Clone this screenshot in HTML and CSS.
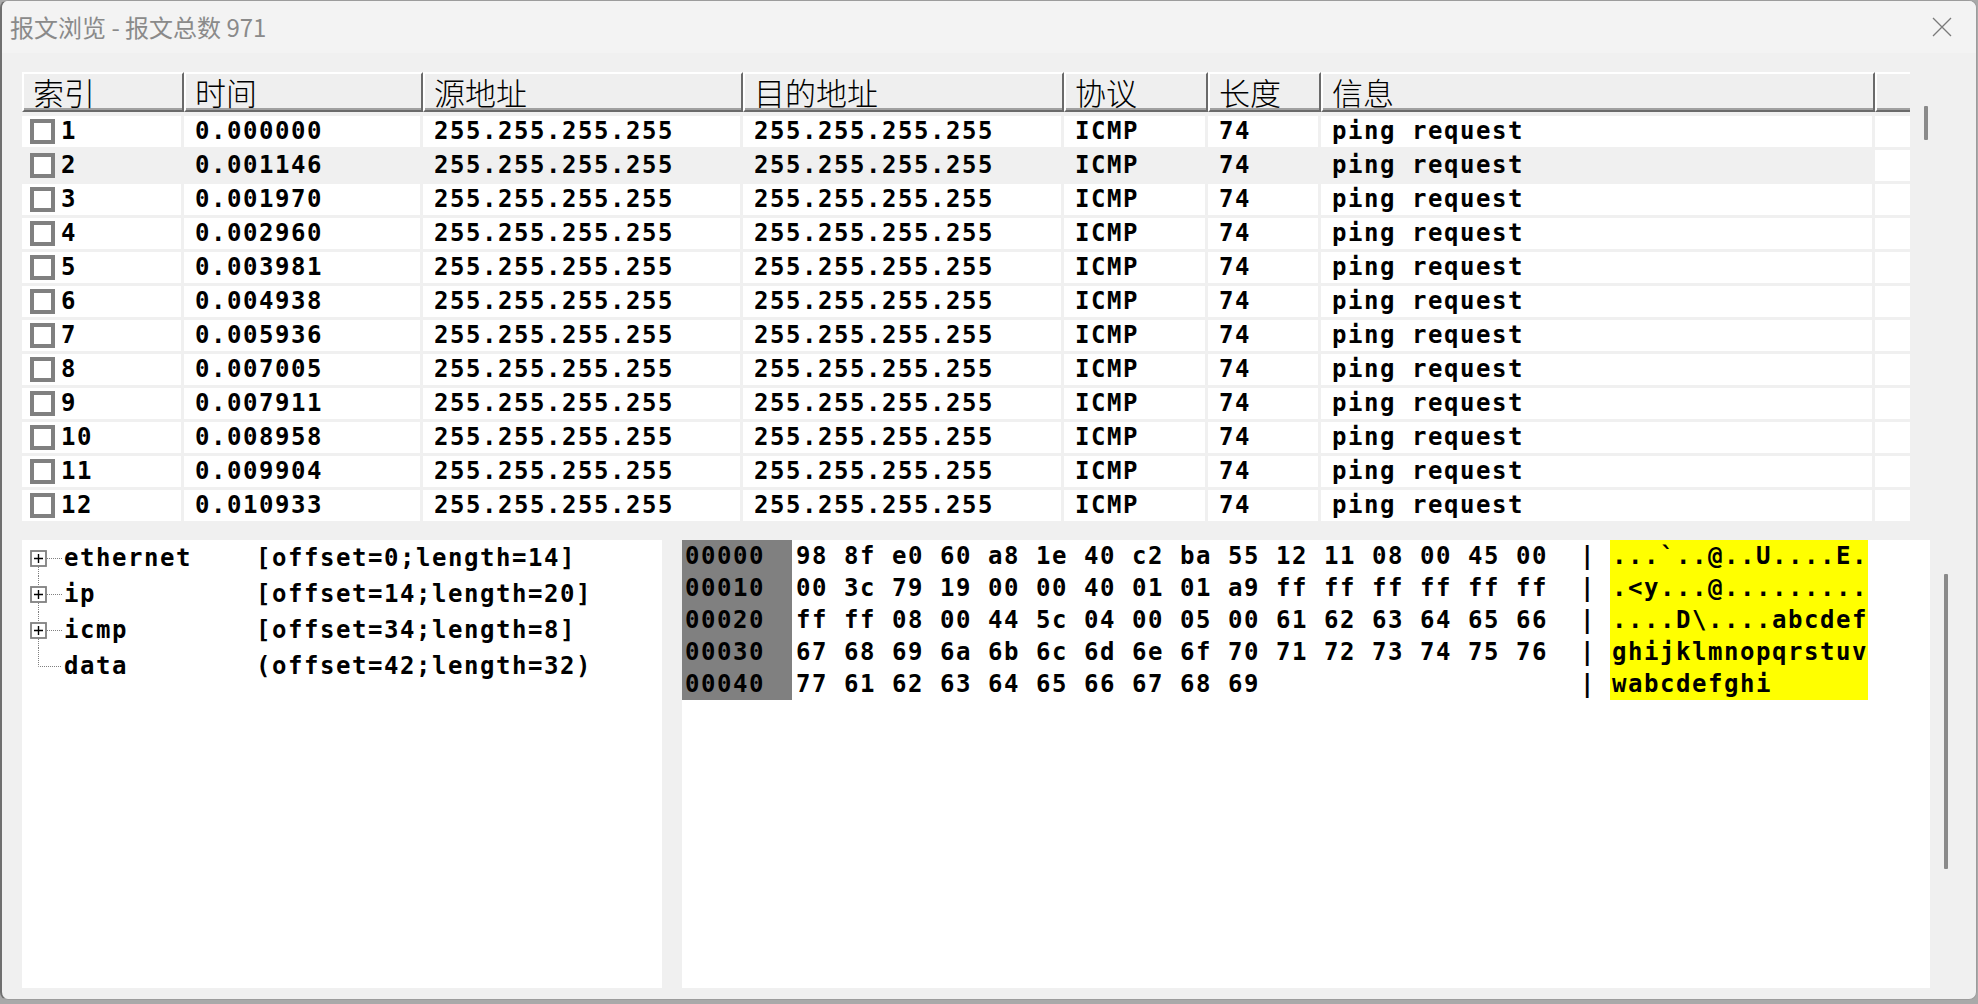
FILE: index.html
```html
<!DOCTYPE html>
<html lang="zh">
<head>
<meta charset="utf-8">
<title>报文浏览</title>
<link rel="stylesheet" href="styles.css">
</head>
<body>
<div class="window">
  <div class="titlebar">
    <span class="title">报文浏览 - 报文总数 971</span>
    <svg class="close" width="20" height="20" viewBox="0 0 20 20"><path d="M1 1 L19 19 M19 1 L1 19" stroke="#7a7a7a" stroke-width="1.3" fill="none"/></svg>
  </div>
  <div class="content">
    <div class="top">
      <div class="table">
        <div class="thead">
          <div class="th">索引</div>
          <div class="th">时间</div>
          <div class="th">源地址</div>
          <div class="th">目的地址</div>
          <div class="th">协议</div>
          <div class="th">长度</div>
          <div class="th th-info">信息</div>
          <div class="th th-end"></div>
        </div>
        <div class="tbody">
          <div class="tr"><div class="td idx"><span class="cb"></span>1</div><div class="td">0.000000</div><div class="td">255.255.255.255</div><div class="td">255.255.255.255</div><div class="td">ICMP</div><div class="td">74</div><div class="td">ping request</div><div class="td end"></div></div>
          <div class="tr hover"><div class="td idx"><span class="cb"></span>2</div><div class="td">0.001146</div><div class="td">255.255.255.255</div><div class="td">255.255.255.255</div><div class="td">ICMP</div><div class="td">74</div><div class="td">ping request</div><div class="td end"></div></div>
          <div class="tr"><div class="td idx"><span class="cb"></span>3</div><div class="td">0.001970</div><div class="td">255.255.255.255</div><div class="td">255.255.255.255</div><div class="td">ICMP</div><div class="td">74</div><div class="td">ping request</div><div class="td end"></div></div>
          <div class="tr"><div class="td idx"><span class="cb"></span>4</div><div class="td">0.002960</div><div class="td">255.255.255.255</div><div class="td">255.255.255.255</div><div class="td">ICMP</div><div class="td">74</div><div class="td">ping request</div><div class="td end"></div></div>
          <div class="tr"><div class="td idx"><span class="cb"></span>5</div><div class="td">0.003981</div><div class="td">255.255.255.255</div><div class="td">255.255.255.255</div><div class="td">ICMP</div><div class="td">74</div><div class="td">ping request</div><div class="td end"></div></div>
          <div class="tr"><div class="td idx"><span class="cb"></span>6</div><div class="td">0.004938</div><div class="td">255.255.255.255</div><div class="td">255.255.255.255</div><div class="td">ICMP</div><div class="td">74</div><div class="td">ping request</div><div class="td end"></div></div>
          <div class="tr"><div class="td idx"><span class="cb"></span>7</div><div class="td">0.005936</div><div class="td">255.255.255.255</div><div class="td">255.255.255.255</div><div class="td">ICMP</div><div class="td">74</div><div class="td">ping request</div><div class="td end"></div></div>
          <div class="tr"><div class="td idx"><span class="cb"></span>8</div><div class="td">0.007005</div><div class="td">255.255.255.255</div><div class="td">255.255.255.255</div><div class="td">ICMP</div><div class="td">74</div><div class="td">ping request</div><div class="td end"></div></div>
          <div class="tr"><div class="td idx"><span class="cb"></span>9</div><div class="td">0.007911</div><div class="td">255.255.255.255</div><div class="td">255.255.255.255</div><div class="td">ICMP</div><div class="td">74</div><div class="td">ping request</div><div class="td end"></div></div>
          <div class="tr"><div class="td idx"><span class="cb"></span>10</div><div class="td">0.008958</div><div class="td">255.255.255.255</div><div class="td">255.255.255.255</div><div class="td">ICMP</div><div class="td">74</div><div class="td">ping request</div><div class="td end"></div></div>
          <div class="tr"><div class="td idx"><span class="cb"></span>11</div><div class="td">0.009904</div><div class="td">255.255.255.255</div><div class="td">255.255.255.255</div><div class="td">ICMP</div><div class="td">74</div><div class="td">ping request</div><div class="td end"></div></div>
          <div class="tr"><div class="td idx"><span class="cb"></span>12</div><div class="td">0.010933</div><div class="td">255.255.255.255</div><div class="td">255.255.255.255</div><div class="td">ICMP</div><div class="td">74</div><div class="td">ping request</div><div class="td end"></div></div>
        </div>
      </div>
      <div class="vscroll vscroll-top"><div class="thumb thumb-top"></div></div>
    </div>
    <div class="bottom">
      <div class="tree">
        <div class="node">
          <svg class="gut" width="42" height="36" viewBox="0 0 42 36"><path d="M16.5 27 V36 M25 18.5 H40" stroke="#808080" stroke-width="1" stroke-dasharray="1 1" fill="none"/><rect x="9" y="11" width="15" height="15" fill="#fff" stroke="#808080" stroke-width="1.8"/><path d="M12 18.5 H21 M16.5 14 V23" stroke="#000" stroke-width="1.4"/></svg>
          <span class="label">ethernet    [offset=0;length=14]</span>
        </div>
        <div class="node">
          <svg class="gut" width="42" height="36" viewBox="0 0 42 36"><path d="M16.5 0 V10 M16.5 27 V36 M25 18.5 H40" stroke="#808080" stroke-width="1" stroke-dasharray="1 1" fill="none"/><rect x="9" y="11" width="15" height="15" fill="#fff" stroke="#808080" stroke-width="1.8"/><path d="M12 18.5 H21 M16.5 14 V23" stroke="#000" stroke-width="1.4"/></svg>
          <span class="label">ip          [offset=14;length=20]</span>
        </div>
        <div class="node">
          <svg class="gut" width="42" height="36" viewBox="0 0 42 36"><path d="M16.5 0 V10 M16.5 27 V36 M25 18.5 H40" stroke="#808080" stroke-width="1" stroke-dasharray="1 1" fill="none"/><rect x="9" y="11" width="15" height="15" fill="#fff" stroke="#808080" stroke-width="1.8"/><path d="M12 18.5 H21 M16.5 14 V23" stroke="#000" stroke-width="1.4"/></svg>
          <span class="label">icmp        [offset=34;length=8]</span>
        </div>
        <div class="node">
          <svg class="gut" width="42" height="36" viewBox="0 0 42 36"><path d="M16.5 0 V18.5 H40" stroke="#808080" stroke-width="1" stroke-dasharray="1 1" fill="none"/></svg>
          <span class="label">data        (offset=42;length=32)</span>
        </div>
      </div>
      <div class="hex">
        <div class="hline"><span class="off">00000</span><span class="bytes">98 8f e0 60 a8 1e 40 c2 ba 55 12 11 08 00 45 00  |</span><span class="ascii">...`..@..U....E.</span></div>
        <div class="hline"><span class="off">00010</span><span class="bytes">00 3c 79 19 00 00 40 01 01 a9 ff ff ff ff ff ff  |</span><span class="ascii">.&lt;y...@.........</span></div>
        <div class="hline"><span class="off">00020</span><span class="bytes">ff ff 08 00 44 5c 04 00 05 00 61 62 63 64 65 66  |</span><span class="ascii">....D\....abcdef</span></div>
        <div class="hline"><span class="off">00030</span><span class="bytes">67 68 69 6a 6b 6c 6d 6e 6f 70 71 72 73 74 75 76  |</span><span class="ascii">ghijklmnopqrstuv</span></div>
        <div class="hline"><span class="off">00040</span><span class="bytes">77 61 62 63 64 65 66 67 68 69                    |</span><span class="ascii">wabcdefghi</span></div>
      </div>
      <div class="vscroll vscroll-bottom"><div class="thumb thumb-bottom"></div></div>
    </div>
  </div>
</div>
</body>
</html>
```
FILE: styles.css
```css
html, body {
  margin: 0;
  padding: 0;
}
body {
  background: #a9a9a9;
  width: 1978px;
  height: 1004px;
  overflow: hidden;
}
.window {
  box-sizing: border-box;
  width: 1977px;
  height: 1000px;
  background: #f0f0f0;
  border: 1px solid #9c9c9c;
  border-left: 2px solid #6f6f6f;
  border-radius: 8px;
  overflow: hidden;
  display: flex;
  flex-direction: column;
}
.titlebar {
  height: 52px;
  flex: none;
  background: #f3f3f3;
  display: flex;
  align-items: center;
  justify-content: space-between;
  padding-left: 8px;
}
.title {
  font-family: "Noto Sans CJK SC", "Noto Sans", sans-serif;
  font-size: 24px;
  color: #8a8a8a;
  line-height: 52px;
}
.close {
  margin-right: 24px;
  display: block;
}
.content {
  flex: 1;
  padding: 19px 0 11px 20px;
  display: flex;
  flex-direction: column;
}
.top {
  display: flex;
}
.table {
  width: 1888px;
  flex: none;
}
.thead {
  display: grid;
  grid-template-columns: 162px 239px 320px 321px 144px 113px 554px 35px;
  height: 40px;
}
.th {
  box-sizing: border-box;
  height: 40px;
  background: #efefef;
  border-top: 2px solid #ffffff;
  border-left: 2px solid #ffffff;
  border-right: 2px solid #6a6a6a;
  border-bottom: 2px solid #6a6a6a;
  box-shadow: inset 0 -2px 0 #a0a0a0;
  font-family: "Noto Sans CJK SC", sans-serif;
  font-weight: 300;
  font-size: 31px;
  line-height: 35px;
  padding-left: 9px;
  color: #000;
  white-space: nowrap;
}
.th-end {
  border-right: 0;
}
.tbody {
  margin-top: 4px;
  display: flex;
  flex-direction: column;
  gap: 3px;
}
.tr {
  display: grid;
  grid-template-columns: 159px 236px 317px 318px 141px 110px 551px 35px;
  column-gap: 3px;
  height: 31px;
}
.td {
  background: #ffffff;
  font-family: "DejaVu Sans Mono", "Liberation Mono", monospace;
  font-weight: bold;
  font-size: 24px;
  letter-spacing: 1.55px;
  line-height: 31px;
  padding-left: 11px;
  color: #000;
  white-space: pre;
  overflow: hidden;
}
.tr.hover .td {
  background: #f0f0f0;
}
.tr.hover .td.end {
  background: #ffffff;
}
.td.idx {
  padding-left: 8px;
  display: flex;
  align-items: center;
}
.cb {
  box-sizing: border-box;
  width: 25px;
  height: 25px;
  border: 4px solid #808080;
  background: #fff;
  margin-right: 6px;
  flex: none;
}
.vscroll {
  flex: 1;
}
.vscroll-top {
  padding: 34px 0 0 14px;
}
.thumb {
  width: 4px;
  background: #8a8a8a;
  border-radius: 1px;
}
.thumb-top {
  height: 34px;
}
.bottom {
  margin-top: 19px;
  display: flex;
  height: 448px;
}
.tree {
  width: 640px;
  flex: none;
  background: #ffffff;
}
.node {
  display: flex;
  align-items: center;
  height: 36px;
}
.gut {
  display: block;
  flex: none;
}
.label {
  font-family: "DejaVu Sans Mono", "Liberation Mono", monospace;
  font-weight: bold;
  font-size: 24px;
  letter-spacing: 1.55px;
  white-space: pre;
  color: #000;
  line-height: 36px;
}
.hex {
  width: 1248px;
  flex: none;
  margin-left: 20px;
  background: #ffffff;
}
.hline {
  display: flex;
  height: 32px;
  font-family: "DejaVu Sans Mono", "Liberation Mono", monospace;
  font-weight: bold;
  font-size: 24px;
  letter-spacing: 1.55px;
  line-height: 32px;
  white-space: pre;
  color: #000;
}
.off {
  box-sizing: border-box;
  width: 110px;
  padding-left: 3px;
  background: #808080;
  flex: none;
}
.bytes {
  margin-left: 4px;
  flex: none;
}
.ascii {
  box-sizing: border-box;
  margin-left: 14px;
  width: 258px;
  padding-left: 2px;
  background: #ffff00;
  flex: none;
  overflow: hidden;
}
.vscroll-bottom {
  padding: 34px 0 0 14px;
}
.thumb-bottom {
  height: 295px;
}
```
